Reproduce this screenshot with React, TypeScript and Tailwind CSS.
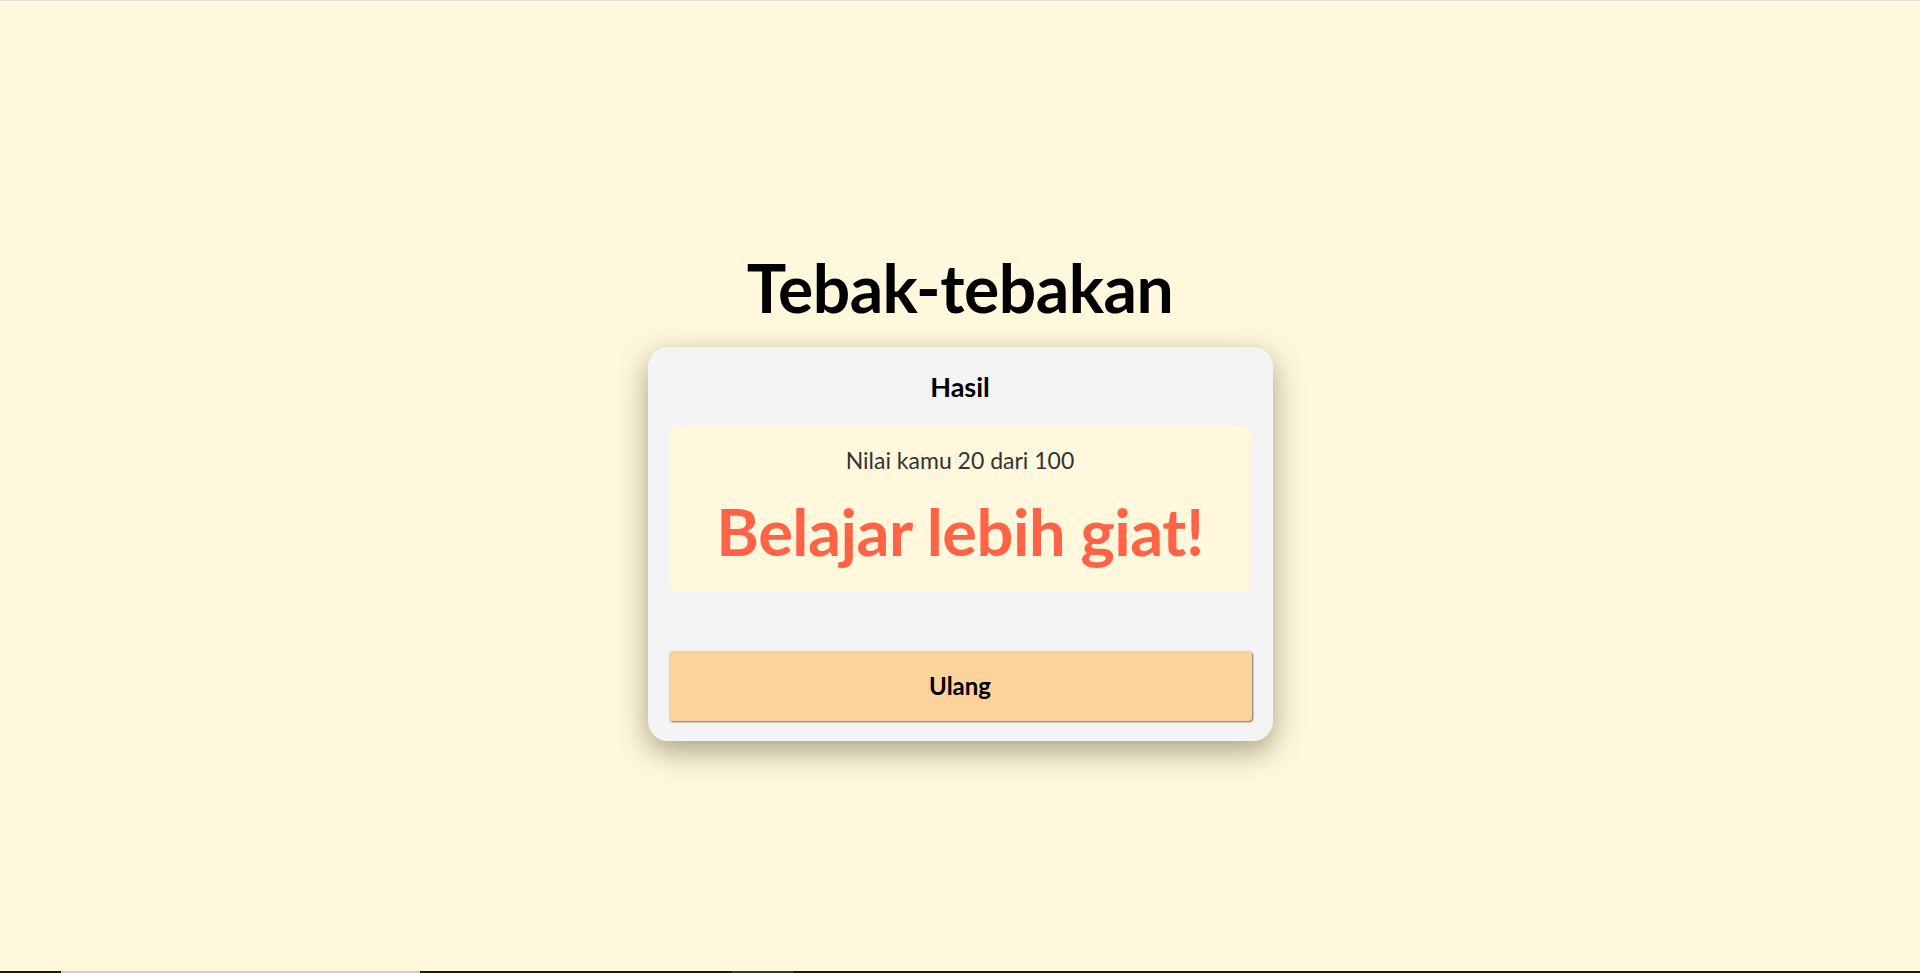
import React from "react";

export default function App() {
  return (
    <div className="h-[973px] w-full flex flex-col bg-[#fff8dc] font-['Lato','Noto_Sans',sans-serif]">
      <div className="h-px bg-[#e4dfd0]" />
      <main className="flex-1 flex flex-col items-center justify-center">
        <h1 className="pt-[6px] text-[66px] leading-[102px] font-bold text-black tracking-[-0.5px]">Tebak-tebakan</h1>
        <div className="mt-[8px] w-[625px] rounded-[20px] bg-[#f4f4f4] px-[21px] pt-[20px] pb-[20px] shadow-[0_10px_30px_rgba(60,50,20,0.45)]">
          <h2 className="text-center text-[27px] leading-[39px] font-bold text-black">Hasil</h2>
          <div className="mt-[20px] h-[166px] rounded-[12px] bg-[#fff8dc] flex flex-col items-center pt-[19px]">
            <p className="text-[23px] leading-[30px] text-[#333333]">Nilai kamu 20 dari 100</p>
            <p className="mt-[20px] text-[65px] leading-[72px] font-bold text-[#ff6347] tracking-[-0.5px]">Belajar lebih giat!</p>
          </div>
          <button className="mt-[59px] w-full h-[70px] rounded-[4px] bg-[#fcd29d] shadow-[1px_1px_2px_rgba(0,0,0,0.55)] text-[24px] font-bold text-black">
            Ulang
          </button>
        </div>
      </main>
      <div className="h-[2px] flex">
        <div className="w-[61px] bg-[#1c1a17]" />
        <div className="w-[359px] bg-[#cfcdc6]" />
        <div className="w-[312px] bg-[#1c1a17]" />
        <div className="w-[61px] bg-[#3a3835]" />
        <div className="flex-1 bg-[#1c1a17]" />
      </div>
    </div>
  );
}
